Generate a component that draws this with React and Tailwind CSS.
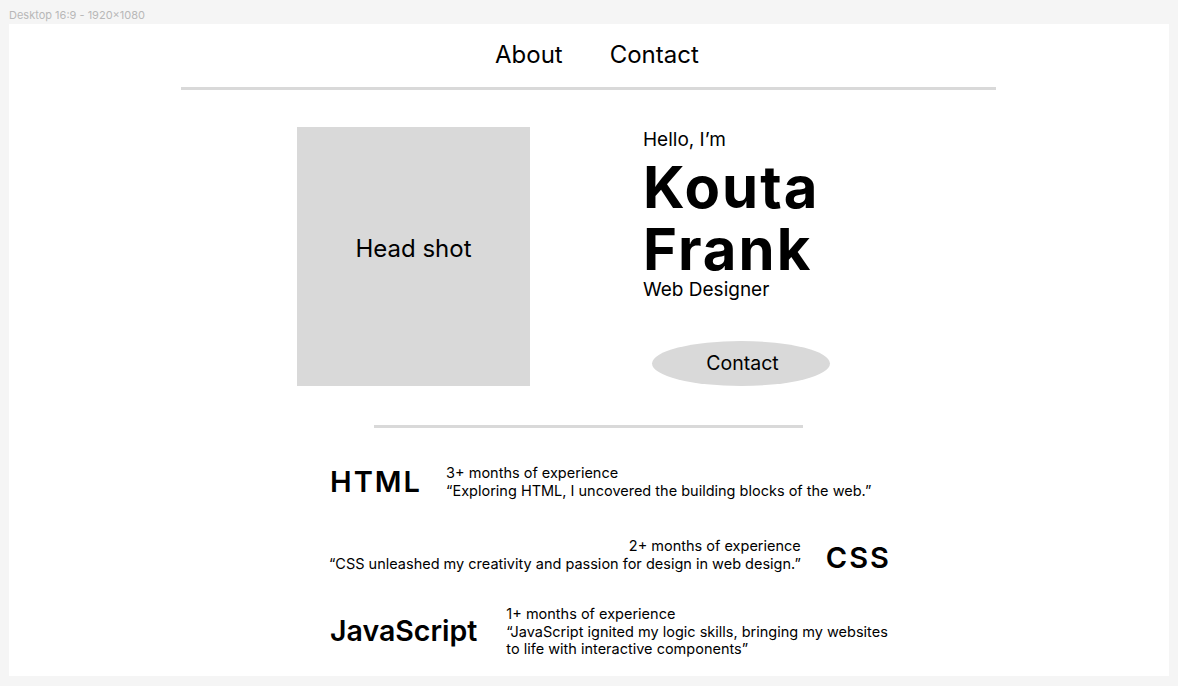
export default function App() {
  const font = { fontFamily: 'Inter, "Noto Sans", sans-serif' };
  return (
    <div className="w-[1178px] h-[686px] bg-[#f5f5f5] overflow-hidden text-black" style={font}>
      <div className="h-[24px] pl-[9px] pt-[9px] text-[11px] leading-[13px] text-[#b8b8b8]">Desktop 16:9 - 1920x1080</div>
      <div className="ml-[9px] w-[1160px] h-[652px] bg-white overflow-hidden">
        {/* nav */}
        <nav className="pt-[16px] pl-[486px] flex gap-[47px] text-[24px] leading-[29px]">
          <span>About</span>
          <span>Contact</span>
        </nav>
        <div className="mt-[18px] ml-[172px] w-[815px] h-[3px] bg-[#d9d9d9]" />

        {/* hero */}
        <section className="mt-[37px] pl-[288px] flex items-start gap-[113px]">
          <div className="w-[233px] h-[259px] pb-[16px] bg-[#d9d9d9] flex items-center justify-center text-[24px]">
            Head shot
          </div>
          <div className="flex flex-col items-start">
            <p className="mt-[1px] text-[19px] leading-[23px]">Hello, I’m</p>
            <h1 className="mt-[5px] text-[58px] leading-[62px] font-bold tracking-[0.035em]">
              Kouta<br />Frank
            </h1>
            <p className="-mt-[2px] text-[19px] leading-[23px]">Web Designer</p>
            <button className="mt-[40px] ml-[9px] w-[178px] h-[45px] pl-[3px] rounded-[50%] bg-[#d9d9d9] text-[19.5px]">
              Contact
            </button>
          </div>
        </section>

        <div className="mt-[39px] ml-[365px] w-[429px] h-[3px] bg-[#d9d9d9]" />

        {/* skills */}
        <section className="mt-[36px] ml-[321px] w-[561px] flex flex-col text-[14.5px] leading-[17.5px]">
          <div className="flex items-center gap-[24px]">
            <span className="text-[29px] leading-[34px] font-semibold tracking-[0.07em]">HTML</span>
            <div className="whitespace-nowrap">
              <p>3+ months of experience</p>
              <p>“Exploring HTML, I uncovered the building blocks of the web.”</p>
            </div>
          </div>
          <div className="mt-[38px] flex items-start justify-end gap-[25px]">
            <div className="text-right whitespace-nowrap">
              <p>2+ months of experience</p>
              <p>“CSS unleashed my creativity and passion for design in web design.”</p>
            </div>
            <span className="mt-[4px] text-[29px] leading-[34px] font-semibold tracking-[0.07em]">CSS</span>
          </div>
          <div className="mt-[30px] flex items-center gap-[29px]">
            <span className="text-[28.5px] leading-[34px] font-semibold">JavaScript</span>
            <div className="w-[390px]">
              <p>1+ months of experience</p>
              <p>“JavaScript ignited my logic skills, bringing my websites to life with interactive components”</p>
            </div>
          </div>
        </section>
      </div>
    </div>
  );
}
